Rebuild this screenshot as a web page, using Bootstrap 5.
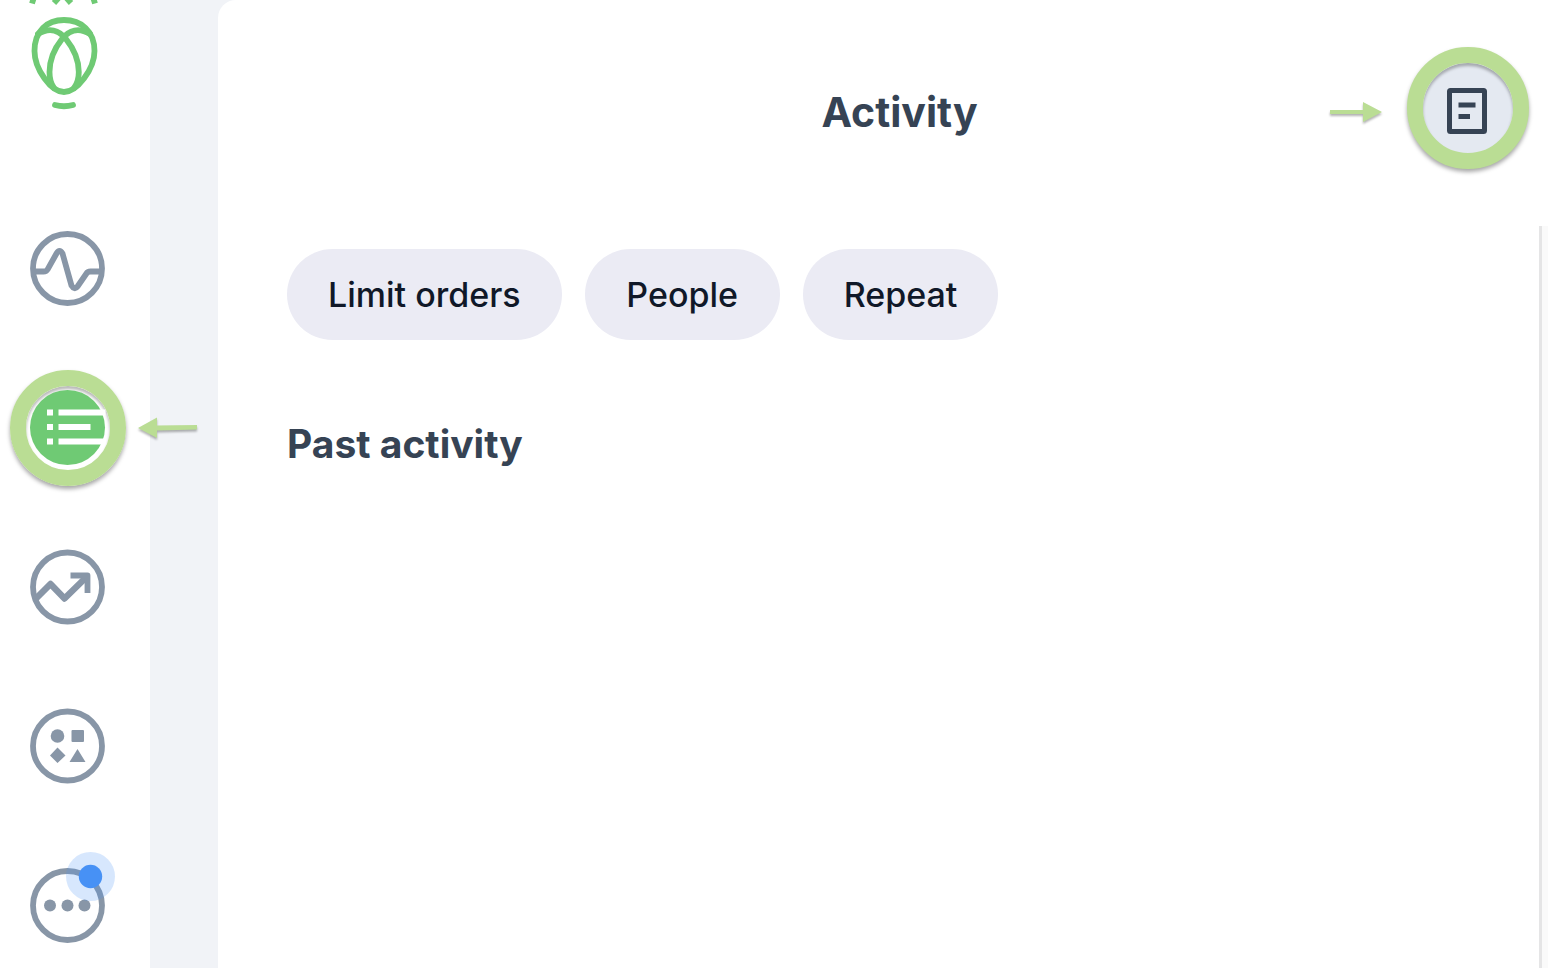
<!DOCTYPE html>
<html lang="en">
<head>
<meta charset="utf-8">
<meta name="viewport" content="width=device-width, initial-scale=1">
<title>Activity</title>
<link rel="stylesheet" href="https://cdn.jsdelivr.net/npm/bootstrap@5.3.0/dist/css/bootstrap.min.css">
<style>
  body { background: #f1f3f7; color: #364354; font-family: Inter, "Liberation Sans", sans-serif; }
  .side-rail { width: 150px; background: #fff; }
  .brand-link { height: 211px; }
  .rail-items { gap: 43px; padding-left: 10px; }
  .rail-link { width: 116px; height: 116px; color: #8896a7; }
  .ring { border: 16px solid #badd94; border-radius: 50%; box-shadow: 0 3px 4px rgba(0,0,0,.35), inset 0 3px 3px rgba(0,0,0,.28); }
  .pointer-left { left: 110px; top: 28px; }
  .panel { background: #fff; margin-left: 68px; border-top-left-radius: 18px; min-width: 0; }
  .panel-head { display: grid; grid-template-columns: 1fr auto 1fr; align-items: center; padding: 47px 19px 57px 52px; }
  .panel-title { font-size: 41px; line-height: 48px; font-weight: 700; padding-top: 7px; }
  .statement-btn { width: 122px; height: 122px; background: #e4e9f1; padding: 0; color: #364354; }
  .pointer-gap { gap: 22px; }
  .panel-content { padding: 23px 69px; }
  .chips { gap: 23px; }
  .chip-btn { background: #ebebf4; color: #101828; border: 0; border-radius: 46px; height: 91px; min-width: 195px; padding: 0 41px; font-size: 34px; line-height: 40px; font-weight: 500; }
  .past-title { font-size: 39px; line-height: 48px; font-weight: 700; margin-top: 80px; }
  .scroll-track { width: 9px; background: #fafafa; border-left: 3px solid #e5e5e6; }
</style>
</head>
<body>
<div class="d-flex min-vh-100">
  <nav class="side-rail flex-shrink-0" aria-label="Main">
    <a class="brand-link d-block" href="#" aria-label="Home">
      <svg class="d-block" width="128" height="112" viewBox="0 0 128 112" fill="none" stroke="#6fca74" stroke-width="5.800" stroke-linecap="round">
        <path d="M35-6 32 3.500M92-6l3 9.500M62-6l-8 9M63-6l8 9" stroke-linecap="butt"/>
        <path d="M64 92C51 92 34.500 69 34.500 51C34.500 31 47 20 64 20S94.500 31 94.500 51C94.500 69 77 92 64 92Z"/>
        <path d="M38 34C49 27 59 30 66 39C74 49 78.800 60 78.800 72C78.800 80 77 84 74 88"/>
        <path d="M90 34C79 27 69 30 62 39C54 49 49.500 60 49.500 72C49.500 80 51 84 54 88"/>
        <path d="M55 105Q64 107.500 73 105"/>
      </svg>
    </a>
    <div class="rail-items d-flex flex-column">
      <a class="rail-link d-flex align-items-center justify-content-center" href="#" aria-label="Markets">
        <svg width="76" height="76" viewBox="0.500 0.500 76 76" fill="none" stroke="currentColor" stroke-width="5.800">
          <circle cx="38" cy="38" r="34.500"/>
          <path d="M4 41h10q3 0 4-2L27 23q3-5 6 0L42 55q3 5 6 1L57 43q1-2 4-2h11"/>
        </svg>
      </a>
      <a class="rail-link ring position-relative d-flex align-items-center justify-content-center" href="#" aria-label="Activity" aria-current="page">
        <svg class="flex-shrink-0" width="76" height="76" viewBox="0.500 0.500 76 76">
          <circle cx="38" cy="38" r="37.500" fill="#6fca74"/>
          <path fill="#fff" d="M17.500 20h6v6h-6zM17.500 34.500h6v6h-6zM17.500 49h6v6h-6zM29 20H76v6H29zM29 34.500h32v6H29zM29 49H76v6H29z"/>
        </svg>
        <svg class="pointer-left position-absolute" width="64" height="28" viewBox="0 0 64 28">
          <path d="M2 14 21 3.500V11.500L61 11V15.500L21 16.500V24Z" fill="#badd94" filter="drop-shadow(0 2px 1px rgba(0,0,0,.3))"/>
        </svg>
      </a>
      <a class="rail-link d-flex align-items-center justify-content-center" href="#" aria-label="Performance">
        <svg width="76" height="76" viewBox="0.500 0 76 76" fill="none" stroke="currentColor" stroke-width="5.800">
          <circle cx="38" cy="38" r="34.500"/>
          <path d="M6 50 21 35 35 49.500 58 27" stroke-width="6.500" stroke-linejoin="round"/>
          <path d="M41 26.500H58V44" stroke-linejoin="round"/>
        </svg>
      </a>
      <a class="rail-link d-flex align-items-center justify-content-center" href="#" aria-label="Explore">
        <svg width="76" height="76" viewBox="0.500 0 76 76" fill="currentColor">
          <circle cx="38" cy="38" r="34.500" fill="none" stroke="currentColor" stroke-width="5.800"/>
          <circle cx="28" cy="28" r="6.800"/><rect x="42" y="22" width="12.500" height="12" rx="1"/>
          <path d="M28 39.500 36 47.500 28 55 20.500 47.500ZM48 41 56 54H40Z"/>
        </svg>
      </a>
      <a class="rail-link d-flex align-items-center justify-content-center" href="#" aria-label="More">
        <svg class="overflow-visible" width="76" height="76" viewBox="0.500 -0.500 76 76" fill="currentColor">
          <circle cx="38" cy="38" r="34.500" fill="none" stroke="currentColor" stroke-width="5.800"/>
          <circle cx="20.500" cy="38" r="6"/><circle cx="38" cy="38" r="6"/><circle cx="55" cy="38" r="6"/>
          <circle cx="61" cy="9" r="24.500" fill="#4791f5" fill-opacity=".22"/>
          <circle cx="61" cy="9" r="11.700" fill="#4791f5"/>
        </svg>
      </a>
    </div>
  </nav>
  <main class="panel flex-grow-1 d-flex flex-column">
    <header class="panel-head">
      <span></span>
      <h1 class="panel-title m-0">Activity</h1>
      <div class="pointer-gap d-flex align-items-center justify-content-end">
        <svg width="58" height="36" viewBox="0 -8 58 36">
          <path d="M3 16V12H36V4L55 14 36 24V16Z" fill="#badd94" filter="drop-shadow(0 2px 1px rgba(0,0,0,.3))"/>
        </svg>
        <button class="statement-btn ring d-flex align-items-center justify-content-center" type="button" aria-label="Statements">
          <svg width="42" height="52" viewBox="0 -6 42 52">
            <rect x="2.500" y="2.500" width="35" height="41" rx="1" fill="none" stroke="currentColor" stroke-width="5"/>
            <path d="M11.500 14.500h17v5h-17zM11.500 26h11.500v5H11.500z" fill="currentColor"/>
          </svg>
        </button>
      </div>
    </header>
    <div class="d-flex flex-grow-1">
      <div class="panel-content flex-grow-1">
        <div class="chips d-flex flex-wrap">
          <button class="chip-btn" type="button">Limit orders</button>
          <button class="chip-btn" type="button">People</button>
          <button class="chip-btn" type="button">Repeat</button>
        </div>
        <h2 class="past-title mb-0">Past activity</h2>
      </div>
      <div class="scroll-track flex-shrink-0"></div>
    </div>
  </main>
</div>
<script src="https://cdn.jsdelivr.net/npm/bootstrap@5.3.0/dist/js/bootstrap.bundle.min.js"></script>
</body>
</html>
